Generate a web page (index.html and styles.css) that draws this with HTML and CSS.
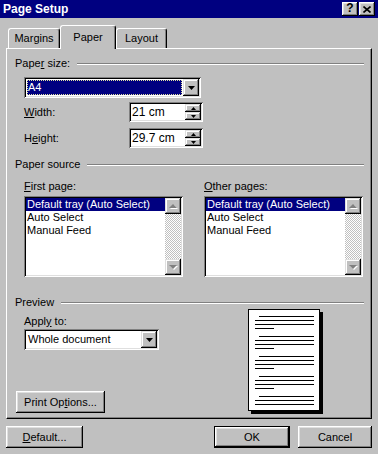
FILE: index.html
```html
<!DOCTYPE html>
<html lang="en">
<head>
    <meta charset="UTF-8">
    <title>Page Setup</title>
    <link rel="stylesheet" href="styles.css">
</head>
<body>
    <div class="dialog">
        <!-- Title bar -->
        <div class="titlebar">
            <span class="title">Page Setup</span>
            <div class="caption-buttons">
                <div class="cap-btn help">?</div>
                <div class="cap-btn">
                    <svg width="8" height="7" viewBox="0 0 8 7"><path d="M0.5 0.5 L7.5 6.5 M7.5 0.5 L0.5 6.5" stroke="#000" stroke-width="1.6" fill="none"/></svg>
                </div>
            </div>
        </div>

        <div class="content">
            <!-- Tabs -->
            <div class="tabs">
                <div class="tab">Margins</div>
                <div class="tab active">Paper</div>
                <div class="tab">Layout</div>
            </div>

            <div class="panel">
                <!-- Paper size -->
                <div class="group-title"><span>Pape<u>r</u> size:</span></div>
                <div class="combo combo-size">
                    <div class="combo-value selected"><span>A4</span></div>
                    <div class="drop-btn">
                        <svg width="7" height="4" viewBox="0 0 7 4"><polygon points="0,0 7,0 3.5,4" fill="#000"/></svg>
                    </div>
                </div>
                <div class="field-row">
                    <label><u>W</u>idth:</label>
                    <div class="spin">
                        <div class="spin-value">21 cm</div>
                        <div class="spin-btns">
                            <div class="spin-btn"><svg width="5" height="3" viewBox="0 0 5 3"><polygon points="2.5,0 5,3 0,3" fill="#000"/></svg></div>
                            <div class="spin-btn"><svg width="5" height="3" viewBox="0 0 5 3"><polygon points="0,0 5,0 2.5,3" fill="#000"/></svg></div>
                        </div>
                    </div>
                </div>
                <div class="field-row row-height">
                    <label>H<u>e</u>ight:</label>
                    <div class="spin">
                        <div class="spin-value">29.7 cm</div>
                        <div class="spin-btns">
                            <div class="spin-btn"><svg width="5" height="3" viewBox="0 0 5 3"><polygon points="2.5,0 5,3 0,3" fill="#000"/></svg></div>
                            <div class="spin-btn"><svg width="5" height="3" viewBox="0 0 5 3"><polygon points="0,0 5,0 2.5,3" fill="#000"/></svg></div>
                        </div>
                    </div>
                </div>

                <!-- Paper source -->
                <div class="group-title source-title"><span>Paper source</span></div>
                <div class="source-cols">
                    <div class="source-col">
                        <div class="col-label"><u>F</u>irst page:</div>
                        <div class="listbox">
                            <div class="list-items">
                                <div class="item sel">Default tray (Auto Select)</div>
                                <div class="item">Auto Select</div>
                                <div class="item">Manual Feed</div>
                            </div>
                            <div class="scrollbar">
                                <div class="scroll-btn">
                                    <svg width="16" height="16" viewBox="0 0 16 16"><polygon points="9,7 13,11 5,11" fill="#fff"/><polygon points="8,6 12,10 4,10" fill="#808080"/></svg>
                                </div>
                                <div class="track"></div>
                                <div class="scroll-btn">
                                    <svg width="16" height="16" viewBox="0 0 16 16"><polygon points="5,7 13,7 9,11" fill="#fff"/><polygon points="4,6 12,6 8,10" fill="#808080"/></svg>
                                </div>
                            </div>
                        </div>
                    </div>
                    <div class="source-col">
                        <div class="col-label"><u>O</u>ther pages:</div>
                        <div class="listbox">
                            <div class="list-items">
                                <div class="item sel">Default tray (Auto Select)</div>
                                <div class="item">Auto Select</div>
                                <div class="item">Manual Feed</div>
                            </div>
                            <div class="scrollbar">
                                <div class="scroll-btn">
                                    <svg width="16" height="16" viewBox="0 0 16 16"><polygon points="9,7 13,11 5,11" fill="#fff"/><polygon points="8,6 12,10 4,10" fill="#808080"/></svg>
                                </div>
                                <div class="track"></div>
                                <div class="scroll-btn">
                                    <svg width="16" height="16" viewBox="0 0 16 16"><polygon points="5,7 13,7 9,11" fill="#fff"/><polygon points="4,6 12,6 8,10" fill="#808080"/></svg>
                                </div>
                            </div>
                        </div>
                    </div>
                </div>

                <!-- Preview -->
                <div class="group-title preview-title"><span>Preview</span></div>
                <div class="preview-row">
                    <div class="preview-left">
                        <div class="col-label apply-label">Appl<u>y</u> to:</div>
                        <div class="combo combo-apply">
                            <div class="combo-value"><span>Whole document</span></div>
                            <div class="drop-btn">
                                <svg width="7" height="4" viewBox="0 0 7 4"><polygon points="0,0 7,0 3.5,4" fill="#000"/></svg>
                            </div>
                        </div>
                        <button class="btn btn-print">Print Op<u>t</u>ions...</button>
                    </div>
                    <svg class="page-preview" width="76" height="105" viewBox="0 0 76 105">
                        <rect x="72" y="3" width="3" height="102" fill="#000"/>
                        <rect x="3" y="102" width="72" height="3" fill="#000"/>
                        <rect x="0.5" y="0.5" width="71" height="101" fill="#fff" stroke="#000"/>
                        <g stroke="#000" stroke-width="1">
                            <path d="M11 7.5H66 M7 11.5H66 M7 15.5H66 M7 19.5H26"/>
                            <path d="M11 27.5H66 M7 31.5H66 M7 35.5H66 M7 39.5H26"/>
                            <path d="M11 47.5H66 M7 51.5H66 M7 55.5H66 M7 59.5H26"/>
                            <path d="M11 67.5H66 M7 71.5H66 M7 75.5H66 M7 79.5H26"/>
                            <path d="M11 87.5H66 M7 91.5H66 M7 95.5H66"/>
                        </g>
                    </svg>
                </div>
            </div>

            <!-- Dialog buttons -->
            <div class="footer">
                <button class="btn btn-default"><u>D</u>efault...</button>
                <button class="btn btn-ok">OK</button>
                <button class="btn btn-cancel">Cancel</button>
            </div>
        </div>
    </div>
</body>
</html>
```

FILE: styles.css
```css
/* Base */
* {
    margin: 0;
    padding: 0;
    box-sizing: border-box;
}

body {
    width: 378px;
    height: 454px;
    overflow: hidden;
    background: #c0c0c0;
    color: #000;
    font-family: 'Liberation Sans', Arial, sans-serif;
    font-size: 11px;
    line-height: 13px;
}

.dialog {
    width: 378px;
    height: 454px;
    background: #c0c0c0;
}

/* Title bar */
.titlebar {
    height: 18px;
    background: #000080;
    display: flex;
    align-items: center;
    justify-content: space-between;
    padding: 0 3px 0 3px;
}

.title {
    color: #fff;
    font-weight: bold;
    font-size: 12px;
}

.caption-buttons {
    display: flex;
    gap: 1px;
}

.cap-btn {
    width: 16px;
    height: 14px;
    background: #c0c0c0;
    display: flex;
    align-items: center;
    justify-content: center;
    box-shadow: inset -1px -1px #000, inset 1px 1px #fff, inset -2px -2px #808080, inset 2px 2px #dfdfdf;
}

.cap-btn.help {
    font-weight: bold;
    font-size: 12px;
    padding-bottom: 1px;
}

/* Content */
.content {
    padding: 7px 6px 0 6px;
}

.tabs {
    display: flex;
    align-items: flex-end;
    height: 23px;
    padding-left: 2px;
}

.tab {
    height: 20px;
    padding-top: 3px;
    text-align: center;
    background: #c0c0c0;
    border-top: 1px solid #fff;
    border-left: 1px solid #fff;
    border-right: 1px solid #000;
    border-radius: 3px 3px 0 0;
    box-shadow: inset -1px 0 #808080;
}

.tab:nth-child(1) { width: 52px; }
.tab:nth-child(3) { width: 51px; }

.tab.active {
    width: 56px;
    height: 24px;
    padding-top: 5px;
    margin-bottom: -1px;
    position: relative;
    z-index: 1;
}

.panel {
    width: 366px;
    height: 371px;
    padding: 8px 7px 0 8px;
    background: #c0c0c0;
    border-top: 1px solid #fff;
    border-left: 1px solid #fff;
    border-right: 1px solid #000;
    border-bottom: 1px solid #000;
    box-shadow: inset -1px -1px #808080;
}

/* Group titles with etched line */
.group-title {
    display: flex;
    align-items: center;
    height: 13px;
    white-space: nowrap;
}

.group-title::after {
    content: "";
    flex: 1;
    margin-left: 7px;
    border-top: 1px solid #808080;
    border-bottom: 1px solid #fff;
}

/* Combo boxes */
.combo {
    display: flex;
    height: 21px;
    margin-left: 9px;
    padding: 2px;
    background: #fff;
    box-shadow: inset 1px 1px #808080, inset -1px -1px #fff, inset 2px 2px #000, inset -2px -2px #dfdfdf;
}

.combo-size {
    width: 177px;
    margin-top: 7px;
}

.combo-apply {
    width: 135px;
    margin-top: 1px;
}

.combo-value {
    flex: 1;
    display: flex;
    align-items: center;
    padding-left: 2px;
    white-space: nowrap;
}

.combo-value.selected {
    margin: 1px;
    padding-left: 1px;
    background: #000080;
    color: #fff;
    outline: 1px dotted #e0e0a0;
    outline-offset: -1px;
}

.drop-btn {
    width: 16px;
    background: #c0c0c0;
    display: flex;
    align-items: center;
    justify-content: center;
    box-shadow: inset -1px -1px #000, inset 1px 1px #dfdfdf, inset -2px -2px #808080, inset 2px 2px #fff;
}

/* Width / height rows */
.field-row {
    display: flex;
    align-items: center;
    margin: 4px 0 0 9px;
}

.field-row.row-height {
    margin-top: 6px;
}

.field-row label {
    width: 105px;
}

.spin {
    display: flex;
    width: 74px;
    height: 20px;
    padding: 2px;
    background: #fff;
    box-shadow: inset 1px 1px #808080, inset -1px -1px #fff, inset 2px 2px #000, inset -2px -2px #dfdfdf;
}

.spin-value {
    flex: 1;
    display: flex;
    align-items: center;
    padding-left: 1px;
    font-size: 12px;
}

.spin-btns {
    width: 16px;
    display: flex;
    flex-direction: column;
}

.spin-btn {
    height: 8px;
    background: #c0c0c0;
    display: flex;
    align-items: center;
    justify-content: center;
    box-shadow: inset -1px -1px #000, inset 1px 1px #dfdfdf, inset -2px -2px #808080, inset 2px 2px #fff;
}

/* Paper source */
.source-title {
    margin-top: 10px;
}

.source-cols {
    display: flex;
    gap: 21px;
    margin: 9px 0 0 9px;
}

.source-col {
    width: 159px;
}

.col-label {
    height: 13px;
}

.listbox {
    display: flex;
    height: 81px;
    margin-top: 3px;
    padding: 2px;
    background: #fff;
    box-shadow: inset 1px 1px #808080, inset -1px -1px #fff, inset 2px 2px #000, inset -2px -2px #dfdfdf;
}

.list-items {
    flex: 1;
    overflow: hidden;
}

.item {
    height: 13px;
    padding-left: 1px;
    white-space: nowrap;
}

.item.sel {
    background: #000080;
    color: #fff;
}

.scrollbar {
    width: 16px;
    display: flex;
    flex-direction: column;
}

.scroll-btn {
    height: 16px;
    background: #c0c0c0;
    box-shadow: inset -1px -1px #000, inset 1px 1px #dfdfdf, inset -2px -2px #808080, inset 2px 2px #fff;
}

.scroll-btn svg {
    display: block;
}

.track {
    flex: 1;
    background: repeating-conic-gradient(#c0c0c0 0 25%, #fff 0 50%) 0 0 / 2px 2px;
}

/* Preview */
.preview-title {
    margin-top: 19px;
}

.preview-row {
    display: flex;
}

.preview-left {
    width: 233px;
    display: flex;
    flex-direction: column;
    align-items: flex-start;
}

.apply-label {
    margin: 6px 0 0 9px;
}

.page-preview {
    display: block;
}

/* Buttons */
.btn {
    height: 22px;
    background: #c0c0c0;
    border: none;
    color: #000;
    font: inherit;
    text-align: center;
    box-shadow: inset -1px -1px #000, inset 1px 1px #fff, inset -2px -2px #808080, inset 2px 2px #dfdfdf;
}

.btn-print {
    width: 89px;
    margin: auto 0 1px 1px;
}

.footer {
    display: flex;
    margin-top: 7px;
}

.btn-default {
    width: 77px;
}

.btn-ok {
    width: 76px;
    margin-left: auto;
    box-shadow: inset 0 0 0 1px #000, inset -2px -2px #000, inset 2px 2px #fff, inset -3px -3px #808080, inset 3px 3px #dfdfdf;
}

.btn-cancel {
    width: 74px;
    margin-left: 8px;
}
```
